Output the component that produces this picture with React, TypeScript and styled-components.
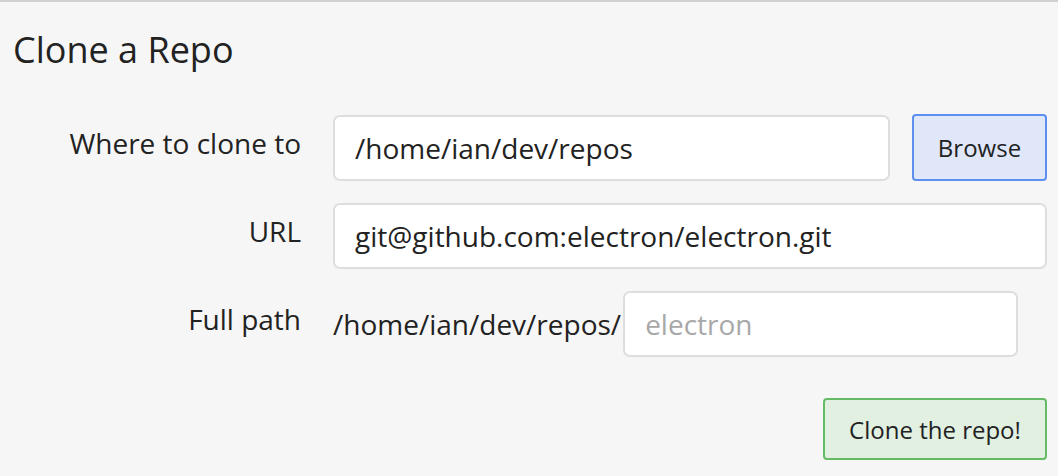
import React from 'react';
import styled, { createGlobalStyle } from 'styled-components';

const GlobalStyle = createGlobalStyle`
  html, body {
    margin: 0;
    padding: 0;
    background: #f6f6f6;
  }
  body {
    font-family: "Open Sans", "DejaVu Sans", sans-serif;
    color: #222;
  }
`;

const Page = styled.div`
  min-height: 476px;
  box-sizing: border-box;
  border-top: 2px solid #d0d0d0;
  padding: 0 11px 0 13px;
`;

const Title = styled.h1`
  font-weight: normal;
  font-size: 36px;
  line-height: 48px;
  margin: 24px 0 40px;
`;

const Form = styled.form`
  display: grid;
  grid-template-columns: 288px 1fr;
  column-gap: 32px;
  row-gap: 22px;
  align-items: center;
`;

const Label = styled.label`
  text-align: right;
  font-size: 28px;
  padding-bottom: 10px;
`;

const Field = styled.div`
  display: flex;
  align-items: center;
  gap: 22px;
`;

const Input = styled.input<{ $width?: number }>`
  box-sizing: border-box;
  height: 66px;
  flex: ${p => (p.$width ? '0 0 auto' : '1')};
  width: ${p => (p.$width ? `${p.$width}px` : 'auto')};
  min-width: 0;
  border: 2px solid #dedede;
  border-radius: 7px;
  background: #fff;
  padding: 0 20px;
  font-family: inherit;
  font-size: 28px;
  color: #222;
  outline: none;

  &::placeholder {
    color: #a8a8a8;
  }
`;

const Prefix = styled.span`
  font-size: 28px;
  margin-right: -20px;
`;

const Button = styled.button<{ $tone: 'blue' | 'green' }>`
  box-sizing: border-box;
  border-radius: 4px;
  border: 2px solid ${p => (p.$tone === 'blue' ? '#5c8ff0' : '#64bb64')};
  background: ${p => (p.$tone === 'blue' ? '#dfe7f8' : '#e2f0e2')};
  font-family: inherit;
  font-size: 24px;
  color: #222;
  cursor: pointer;
`;

const BrowseButton = styled(Button)`
  width: 135px;
  height: 67px;
  flex: 0 0 auto;
`;

const Actions = styled.div`
  display: flex;
  justify-content: flex-end;
  margin-top: 41px;
`;

const CloneButton = styled(Button)`
  width: 224px;
  height: 62px;
`;

const App: React.FC = () => {
  return (
    <Page>
      <GlobalStyle />
      <Title>Clone a Repo</Title>
      <Form onSubmit={e => e.preventDefault()}>
        <Label>Where to clone to</Label>
        <Field>
          <Input defaultValue="/home/ian/dev/repos" />
          <BrowseButton type="button" $tone="blue">Browse</BrowseButton>
        </Field>

        <Label>URL</Label>
        <Field>
          <Input defaultValue="git@github.com:electron/electron.git" />
        </Field>

        <Label>Full path</Label>
        <Field>
          <Prefix>/home/ian/dev/repos/</Prefix>
          <Input $width={395} placeholder="electron" />
        </Field>
      </Form>
      <Actions>
        <CloneButton type="button" $tone="green">Clone the repo!</CloneButton>
      </Actions>
    </Page>
  );
};

export default App;
